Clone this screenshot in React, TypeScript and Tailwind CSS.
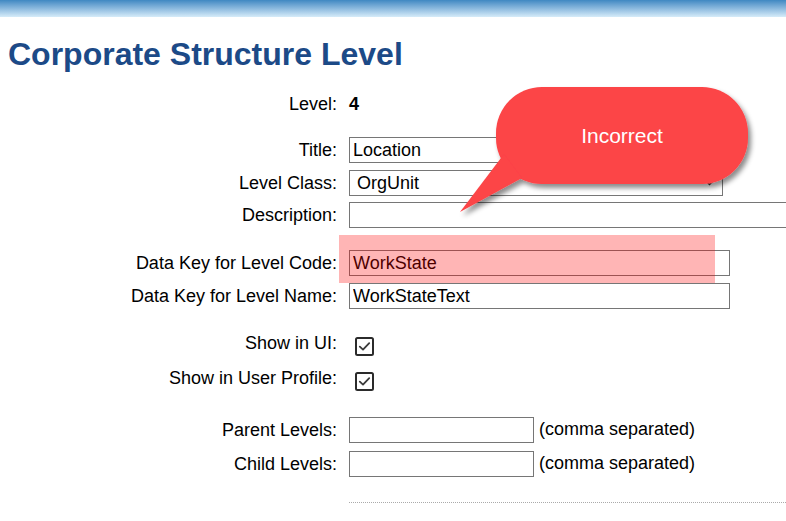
const inputCls =
  "h-[26px] border border-[#767676] bg-white px-[3px] text-[18px] text-black outline-none";

const Label = ({ text, className = "" }: { text: string; className?: string }) => (
  <div className={`w-[337px] shrink-0 text-right leading-[26px] ${className}`}>{text}</div>
);

const Check = () => (
  <svg width="19" height="19" viewBox="0 0 19 19" className="ml-[6px]">
    <rect x="1" y="1" width="17" height="17" rx="1.5" fill="#fff" stroke="#2b2b2b" strokeWidth="2" />
    <path d="M4.8 9.6 L8 12.6 L14.2 6.2" fill="none" stroke="#3a3a3a" strokeWidth="1.8" strokeLinecap="round" strokeLinejoin="round" />
  </svg>
);

const Bubble = () => (
  <>
    <svg width="320" height="150" viewBox="0 0 320 150" className="absolute left-[450px] top-[80px]">
      <defs>
        <filter id="sh" x="-10%" y="-10%" width="130%" height="140%">
          <feDropShadow dx="3" dy="4" stdDeviation="2.5" floodColor="#000" floodOpacity="0.45" />
        </filter>
      </defs>
      <g filter="url(#sh)" fill="#fc4447">
        <rect x="46" y="7" width="252" height="97" rx="46" />
        <path d="M54 74 L10 132 L72 98 Z" />
      </g>
    </svg>
    <div className="absolute left-[496px] top-[87px] flex h-[97px] w-[252px] items-center justify-center text-[21px] text-white">
      Incorrect
    </div>
  </>
);

export default function App() {
  return (
    <div className="relative h-[521px] w-full overflow-hidden bg-white font-['Liberation_Sans',Arial,sans-serif] text-[18px] text-black">
      <div className="h-[17px] bg-gradient-to-b from-[#3f88c2] to-[#d6ecf9]" />
      <h1 className="ml-2 mt-[19px] text-[32px] font-bold leading-[36px] text-[#1c4a87]">
        Corporate Structure Level
      </h1>

      <div className="mt-[19px] flex h-[26px] items-center gap-3">
        <Label text="Level:" />
        <span className="font-bold">4</span>
      </div>

      <div className="mt-[20px] flex items-center gap-3">
        <Label text="Title:" />
        <input className={`${inputCls} w-[381px]`} defaultValue="Location" />
      </div>

      <div className="mt-[7px] flex items-center gap-3">
        <Label text="Level Class:" />
        <div className="flex h-[26px] w-[374px] items-center justify-between border border-[#767676] pl-[7px] pr-[8px]">
          <span>OrgUnit</span>
          <svg width="9" height="6" viewBox="0 0 9 6">
            <path d="M1 1 L4.5 4.5 L8 1" fill="none" stroke="#333" strokeWidth="1.5" />
          </svg>
        </div>
      </div>

      <div className="mt-[6px] flex items-center gap-3">
        <Label text="Description:" />
        <input className={`${inputCls} w-[520px] shrink-0`} defaultValue="" />
      </div>

      <div className="mt-[22px] flex items-center gap-3">
        <Label text="Data Key for Level Code:" />
        <input className={`${inputCls} w-[381px]`} defaultValue="WorkState" />
      </div>

      <div className="mt-[7px] flex items-center gap-3">
        <Label text="Data Key for Level Name:" />
        <input className={`${inputCls} w-[381px]`} defaultValue="WorkStateText" />
      </div>

      <div className="mt-[24px] flex h-[26px] items-center gap-3">
        <Label text="Show in UI:" className="-translate-y-[3px]" />
        <Check />
      </div>

      <div className="mt-[9px] flex h-[26px] items-center gap-3">
        <Label text="Show in User Profile:" className="-translate-y-[3px]" />
        <Check />
      </div>

      <div className="mt-[22px] flex items-center gap-3">
        <Label text="Parent Levels:" />
        <div className="flex items-center gap-[5px]">
          <input className={`${inputCls} w-[185px]`} defaultValue="" />
          <span>(comma separated)</span>
        </div>
      </div>

      <div className="mt-[7px] flex items-center gap-3">
        <Label text="Child Levels:" />
        <div className="flex items-center gap-[5px]">
          <input className={`${inputCls} w-[185px]`} defaultValue="" />
          <span>(comma separated)</span>
        </div>
      </div>

      <div className="ml-[349px] mt-[25px] border-t border-dotted border-[#aaa]" />

      {/* annotations */}
      <div className="absolute left-[339px] top-[235px] h-[48px] w-[376px] bg-[rgba(255,0,0,0.29)]" />
      <Bubble />
    </div>
  );
}
